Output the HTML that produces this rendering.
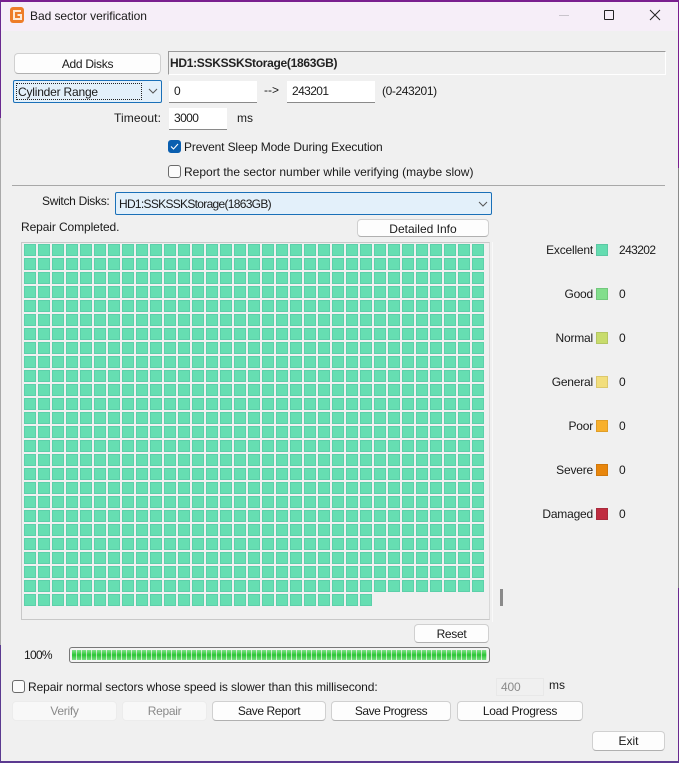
<!DOCTYPE html>
<html><head><meta charset="utf-8"><style>
html,body{margin:0;padding:0;width:679px;height:763px;overflow:hidden;background:#f0f0f0}
body{position:relative;font-family:"Liberation Sans",sans-serif;font-size:12px;color:#1a1a1a}
.a{position:absolute;white-space:nowrap;line-height:16px}
.b{position:absolute;box-sizing:border-box;background:#fdfdfd;border:1px solid #d0d0d0;border-bottom-color:#b0b0b0;border-radius:4px;text-align:center;color:#1a1a1a;white-space:nowrap}
.d{background:#f8f8f8;border:1px solid #ececec;color:#8a8a8a}
.i{position:absolute;box-sizing:border-box;background:#fff;border-bottom:1px solid #8a8a8a;padding-left:5px;white-space:nowrap}
.c{position:absolute;box-sizing:border-box;width:13px;height:13px;background:#fbfbfb;border:1px solid #6b6b6b;border-radius:3px}
.s{position:absolute;left:596px;width:12px;height:12px;box-sizing:border-box;border:1px solid}
.r{text-align:right;width:100px;left:493px;letter-spacing:-.2px}
.n{letter-spacing:-.6px}
</style></head><body>
<!-- window frame -->
<div style="position:absolute;left:0;top:0;width:679px;height:31px;background:#f6eef8"></div>
<div style="position:absolute;left:0;top:0;width:679px;height:2px;background:#7a1f8f"></div>
<div style="position:absolute;left:0;top:0;width:1px;height:118px;background:#6a2a90"></div>
<div style="position:absolute;left:0;top:118px;width:1px;height:527px;background:#a9a9a9"></div>
<div style="position:absolute;left:0;top:645px;width:1px;height:118px;background:#5b3a90"></div>
<div style="position:absolute;left:678px;top:0;width:1px;height:168px;background:#7a1f8f"></div>
<div style="position:absolute;left:678px;top:168px;width:1px;height:420px;background:#8a8a8a"></div>
<div style="position:absolute;left:678px;top:588px;width:1px;height:175px;background:#6a2a90"></div>
<div style="position:absolute;left:0;top:761px;width:679px;height:2px;background:#5b3a90"></div>
<!-- title -->
<svg style="position:absolute;left:10px;top:7px" width="15" height="16" viewBox="0 0 15 16"><rect width="14" height="16" rx="3" fill="#ee7d28"/><path d="M11 4H4V12H11V8H7.5" fill="none" stroke="#fde9d6" stroke-width="2"/></svg>
<div class="a" style="left:30px;top:8px;letter-spacing:-.05px">Bad sector verification</div>
<div style="position:absolute;left:559px;top:15px;width:10px;height:1px;background:#c9c4cc"></div>
<div style="position:absolute;left:604px;top:10px;width:8px;height:8px;border:1px solid #222;border-radius:1px"></div>
<svg style="position:absolute;left:649px;top:9px" width="12" height="12"><path d="M1 1L11 11M11 1L1 11" stroke="#222" stroke-width="1"/></svg>
<!-- top -->
<div class="b" style="left:14px;top:53px;width:147px;height:21px;line-height:20px;letter-spacing:-.3px">Add Disks</div>
<div style="position:absolute;box-sizing:border-box;left:168px;top:51px;width:498px;height:24px;border-top:1px solid #9a9a9a;border-left:1px solid #9a9a9a;border-right:1px solid #fff;border-bottom:1px solid #fff"></div>
<div class="a" style="left:170px;top:55px;font-weight:bold;color:#222;letter-spacing:-.3px">HD1:SSKSSKStorage(1863GB)</div>
<div style="position:absolute;box-sizing:border-box;left:13px;top:80px;width:149px;height:23px;background:#e3f0fa;border:1px solid #1a70b8;border-radius:2px"></div>
<div style="position:absolute;box-sizing:border-box;left:16px;top:83px;width:126px;height:17px;border:1px dotted #222"></div>
<div class="a" style="left:18px;top:84px;letter-spacing:-.2px">Cylinder Range</div>
<svg style="position:absolute;left:148px;top:88px" width="10" height="6"><path d="M1 1L5 5L9 1" fill="none" stroke="#555"/></svg>
<div class="i" style="left:169px;top:81px;width:88px;height:22px;line-height:21px;padding-left:5px">0</div>
<div class="a" style="left:264px;top:82px">--&gt;</div>
<div class="i n" style="left:287px;top:81px;width:88px;height:22px;line-height:21px;padding-left:5px">243201</div>
<div class="a" style="left:382px;top:83px;letter-spacing:-.4px">(0-243201)</div>
<div class="a" style="left:114px;top:110px;letter-spacing:.1px">Timeout:</div>
<div class="i n" style="left:169px;top:108px;width:58px;height:22px;line-height:20px;padding-left:5px">3000</div>
<div class="a" style="left:237px;top:110px">ms</div>
<div class="c" style="left:168px;top:140px;background:#0a5fb0;border-color:#0a5fb0"></div>
<svg style="position:absolute;left:170px;top:142px" width="9" height="9"><path d="M1 4.5L3.5 7L8 2" fill="none" stroke="#fff" stroke-width="1.1"/></svg>
<div class="a" style="left:184px;top:139px;letter-spacing:-.14px">Prevent Sleep Mode During Execution</div>
<div class="c" style="left:168px;top:165px"></div>
<div class="a" style="left:184px;top:164px">Report the sector number while verifying (maybe slow)</div>
<div style="position:absolute;left:12px;top:185px;width:653px;height:1px;background:#a8a8a8"></div>
<!-- switch -->
<div class="a" style="left:42px;top:193px;letter-spacing:-.3px">Switch Disks:</div>
<div style="position:absolute;box-sizing:border-box;left:115px;top:192px;width:377px;height:23px;background:#e3f0fa;border:1px solid #1a70b8;border-radius:2px"></div>
<div class="a" style="left:119px;top:196px;letter-spacing:-.7px">HD1:SSKSSKStorage(1863GB)</div>
<svg style="position:absolute;left:478px;top:201px" width="10" height="6"><path d="M1 1L5 5L9 1" fill="none" stroke="#555"/></svg>
<div class="a" style="left:21px;top:219px;letter-spacing:-.1px">Repair Completed.</div>
<div class="b" style="left:357px;top:219px;width:132px;height:18px;line-height:18px">Detailed Info</div>
<!-- grid -->
<div style="position:absolute;box-sizing:border-box;left:21px;top:242px;width:469px;height:378px;border:1px solid #c8c8c8;border-right-color:#d8d8d8"></div>
<div style="position:absolute;left:492px;top:242px;width:1px;height:380px;background:#f9f9f9"></div>
<svg style="position:absolute;left:24px;top:244px" width="462" height="364">
<defs><pattern id="p" x="0" y="0" width="14" height="14" patternUnits="userSpaceOnUse"><rect x=".5" y=".5" width="11" height="11" fill="#66deb2" stroke="#5cd0aa"/></pattern></defs>
<rect x="0" y="0" width="462" height="350" fill="url(#p)"/>
<rect x="0" y="350" width="350" height="14" fill="url(#p)"/>
</svg>
<div style="position:absolute;left:500px;top:589px;width:3px;height:17px;background:#8a8a8a"></div>
<!-- legend -->
<div class="a r" style="top:242px">Excellent</div><div class="s" style="top:244px;background:#64dcb0;border-color:#5cc8a4"></div><div class="a n" style="left:619px;top:242px">243202</div>
<div class="a r" style="top:286px">Good</div><div class="s" style="top:288px;background:#82de8c;border-color:#72c87c"></div><div class="a" style="left:619px;top:286px">0</div>
<div class="a r" style="top:330px">Normal</div><div class="s" style="top:332px;background:#c8dc6c;border-color:#b4c664"></div><div class="a" style="left:619px;top:330px">0</div>
<div class="a r" style="top:374px">General</div><div class="s" style="top:376px;background:#f2de7c;border-color:#dcc86c"></div><div class="a" style="left:619px;top:374px">0</div>
<div class="a r" style="top:418px">Poor</div><div class="s" style="top:420px;background:#f8b02c;border-color:#e09e28"></div><div class="a" style="left:619px;top:418px">0</div>
<div class="a r" style="top:462px">Severe</div><div class="s" style="top:464px;background:#e8860c;border-color:#d0780c"></div><div class="a" style="left:619px;top:462px">0</div>
<div class="a r" style="top:506px">Damaged</div><div class="s" style="top:508px;background:#c02c40;border-color:#a82a3c"></div><div class="a" style="left:619px;top:506px">0</div>
<!-- bottom -->
<div class="b" style="left:414px;top:624px;width:75px;height:19px;line-height:18px;letter-spacing:-.3px">Reset</div>
<div class="a" style="left:24px;top:647px;letter-spacing:-.7px">100%</div>
<div style="position:absolute;box-sizing:border-box;left:69px;top:647px;width:421px;height:16px;background:#f4f4f4;border:1px solid #777;border-radius:3px"></div>
<div style="position:absolute;left:72px;top:650px;width:415px;height:10px;background:repeating-linear-gradient(90deg,#2fd03c 0 4px,#c8eec8 4px 5px)"></div>
<div style="position:absolute;left:72px;top:650px;width:415px;height:10px;background:linear-gradient(180deg,rgba(255,255,255,.4),rgba(0,120,0,.12) 50%,rgba(255,255,255,.35))"></div>
<div class="c" style="left:12px;top:680px"></div>
<div class="a" style="left:28px;top:679px;letter-spacing:-.1px">Repair normal sectors whose speed is slower than this millisecond:</div>
<div style="position:absolute;box-sizing:border-box;left:496px;top:678px;width:48px;height:18px;border:1px solid #e8e8e8;background:#f0f0f0;color:#8a8a8a;line-height:17px;padding-left:4px;letter-spacing:-.2px">400</div>
<div class="a" style="left:549px;top:677px">ms</div>
<div class="b d" style="left:12px;top:701px;width:105px;height:20px;line-height:19px;letter-spacing:-.3px">Verify</div>
<div class="b d" style="left:122px;top:701px;width:85px;height:20px;line-height:19px;letter-spacing:-.3px">Repair</div>
<div class="b" style="left:212px;top:701px;width:114px;height:20px;line-height:19px;letter-spacing:-.4px">Save Report</div>
<div class="b" style="left:331px;top:701px;width:120px;height:20px;line-height:19px;letter-spacing:-.5px">Save Progress</div>
<div class="b" style="left:457px;top:701px;width:126px;height:20px;line-height:19px;letter-spacing:-.3px">Load Progress</div>
<div class="b" style="left:592px;top:731px;width:73px;height:20px;line-height:19px">Exit</div>
</body></html>
